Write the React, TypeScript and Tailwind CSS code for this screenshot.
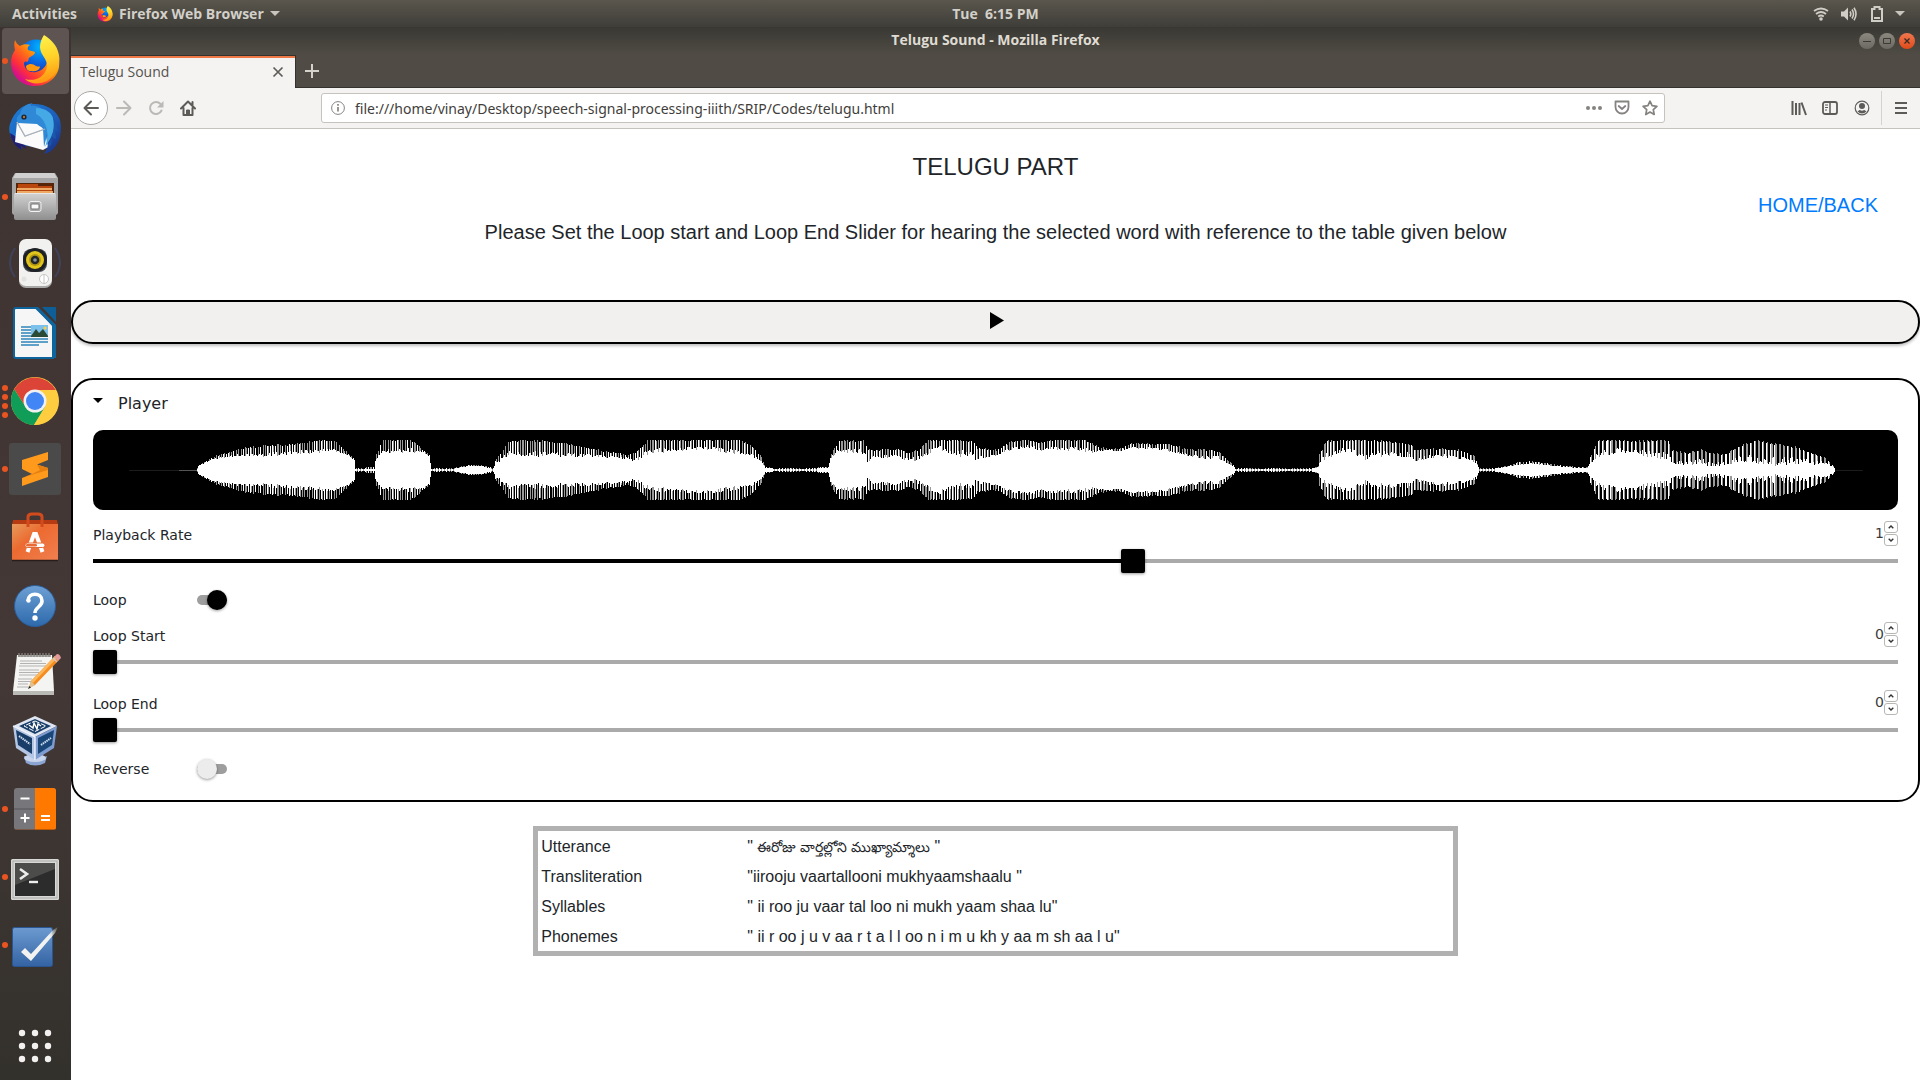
import React, { useState } from "react";

/* Envelope of the clip: [x, peak height, trough height], centre line at 40 */
const ENVELOPE: number[][] = [
  [104, 1, 1], [105, 4, 4], [118, 12, 10], [130, 16, 12], [151, 22, 14], [171, 24, 13], [191, 25, 15], [212, 27, 16],
  [228, 30, 17], [241, 29, 18], [253, 18, 15], [261, 11, 10], [262, 1, 1], [281, 2, 1], [283, 15, 10], [289, 30, 17],
  [318, 30, 17], [330, 20, 17], [336, 15, 13], [338, 1, 1], [359, 1, 1], [375, 4, 4], [387, 4, 4], [400, 1, 1],
  [402, 9, 6], [416, 29, 14], [457, 29, 13], [485, 24, 13], [510, 19, 12], [534, 15, 11], [543, 18, 8], [555, 30, 16],
  [607, 30, 20], [646, 30, 15], [658, 25, 12], [668, 13, 8], [672, 2, 2], [686, 1, 1], [722, 1, 1], [726, 2, 2],
  [735, 2, 2], [737, 14, 11], [745, 29, 17], [771, 29, 16], [775, 20, 5], [777, 20, 11], [805, 21, 13], [813, 17, 9],
  [824, 19, 9], [836, 30, 16], [846, 30, 21], [858, 30, 12], [880, 29, 14], [884, 22, 4], [886, 22, 10], [903, 20, 13],
  [919, 29, 20], [935, 30, 22], [949, 27, 18], [955, 30, 20], [991, 30, 18], [1002, 25, 17], [1014, 21, 20],
  [1026, 21, 18], [1038, 26, 22], [1073, 26, 19], [1097, 20, 13], [1117, 20, 10], [1125, 18, 11], [1141, 3, 3],
  [1142, 1, 1], [1218, 1, 1], [1222, 2, 2], [1225, 3, 3], [1226, 15, 6], [1233, 29, 11], [1254, 30, 19], [1270, 30, 10],
  [1290, 29, 13], [1318, 25, 12], [1322, 19, 8], [1334, 21, 10], [1345, 21, 13], [1365, 20, 11], [1381, 14, 8],
  [1385, 3, 3], [1386, 1, 1], [1399, 1, 1], [1413, 3, 3], [1424, 7, 5], [1440, 8, 6], [1460, 5, 4], [1484, 2, 2],
  [1494, 2, 2], [1495, 9, 4], [1505, 29, 12], [1523, 30, 17], [1543, 29, 15], [1575, 29, 10], [1579, 19, 6],
  [1595, 17, 4], [1608, 20, 6], [1618, 16, 3], [1634, 16, 4], [1646, 24, 9], [1662, 29, 6], [1681, 26, 4],
  [1701, 23, 6], [1721, 16, 5], [1733, 11, 6], [1741, 2, 2], [1745, 1, 1],
];

function buildWave() {
  let white = "";
  let grey = "";
  let k = 0;
  for (let x = 104; x < 1742; x++) {
    while (k < ENVELOPE.length - 2 && ENVELOPE[k + 1][0] <= x) k++;
    const [x0, p0, t0] = ENVELOPE[k];
    const [x1, p1, t1] = ENVELOPE[k + 1];
    const f = (x - x0) / (x1 - x0);
    const peak = p0 + (p1 - p0) * f;
    const trough = t0 + (t1 - t0) * f;
    const noise = Math.abs(Math.sin(x * 12.9898) * 43758.5453) % 1;
    const period = x < 560 ? 2.45 : x < 1200 ? 2.7 : x < 1480 ? 3.1 : 4.1;
    const phase = (x / period) % 1;
    const isPeak = phase < 0.52;
    const bar = (h: number) => `M${x} ${40 - h}h1v${2 * h}h-1z`;
    if (peak < 1.5 && x % 3 === 0) {
      grey += bar(1);
      continue;
    }
    const inner = Math.max(1, Math.round(trough + noise * (peak - trough) * 0.4));
    const outer = Math.max(1, Math.min(30, Math.round(peak + 1 - noise * Math.min(2, peak * 0.1))));
    white += bar(inner);
    if (isPeak) {
      if (phase < 0.3 && noise > 0.3) white += bar(outer);
      else grey += bar(outer);
    }
  }
  return { white, grey };
}
const WAVE = buildWave();

function Firefox({ className }: { className: string }) {
  return (
    <svg viewBox="0 0 52 52" className={className} aria-hidden="true">
      <defs>
        <linearGradient id="ffBody" x1="0.85" y1="0.1" x2="0.15" y2="0.8">
          <stop offset="0" stopColor="#fff44f" /><stop offset="0.3" stopColor="#ffb000" />
          <stop offset="0.55" stopColor="#ff6a1a" /><stop offset="0.8" stopColor="#ff2f3a" /><stop offset="1" stopColor="#d6108a" />
        </linearGradient>
        <radialGradient id="ffGlobe" cx="0.6" cy="0.2" r="0.9">
          <stop offset="0" stopColor="#00b4ff" /><stop offset="0.5" stopColor="#0a62e0" /><stop offset="1" stopColor="#311a86" />
        </radialGradient>
        <linearGradient id="ffTail" x1="0.3" y1="0" x2="0.5" y2="1">
          <stop offset="0" stopColor="#fff44f" /><stop offset="0.5" stopColor="#ffd42a" /><stop offset="1" stopColor="#ff9412" />
        </linearGradient>
      </defs>
      <circle cx="27" cy="23" r="18.5" fill="url(#ffGlobe)" />
      <path d="M6 5c1 3 3 5 5 6 3-2 7-2 10-1-2 1-3 3-2 5 2 1 5 1 7 2 0 3-4 4-6 6-1 2 0 3-2 4-2-1-3 0-3 2 1 6 6 9 12 8 9-2 13-9 11-17-2-5-3-9 0-12 7 4 11 11 12 18 2 14-10 25-24 25C12 51 2 41 2 27 2 22 4 18 6 15c-1-3-1-7 0-10z" fill="url(#ffBody)" />
      <path d="M35 0c6 4 13 9 15 20 2 10-3 21-12 26-8 4-17 3-22-2 10 3 20-2 22-12 1-8-7-12-7-20 0-5 2-9 4-12z" fill="url(#ffTail)" />
      <path d="M17 31c4-3 7-2 10 0 2 1 4 0 4 1-1 4-6 5-9 4-3 0-5-2-5-5z" fill="#ff980e" />
    </svg>
  );
}

const big = "size-[52px] shrink-0";

function Thunderbird() {
  return (
    <svg viewBox="0 0 52 52" className={big} aria-hidden="true">
      <defs>
        <linearGradient id="tb" x1="0" y1="0" x2="1" y2="1"><stop offset="0" stopColor="#1c7fd8" /><stop offset="0.6" stopColor="#1c5cb8" /><stop offset="1" stopColor="#1a2a80" /></linearGradient>
      </defs>
      <path d="M3 16C7 8 13 2 22 1c14-1 25 5 29 16 2 9 1 20-5 27-3 4-7 6-11 7l3-5-26-4 1 5C4 42-2 30 1 21z" fill="url(#tb)" />
      <path d="M1 30c1 8 6 14 12 17l-1-4 6 3-6-9z" fill="#201f72" />
      <path d="M8 19l27 3 4 22-5 3-28-8z" fill="#fbfbfb" />
      <path d="M8 19l8 14 20-7" fill="none" stroke="#a9b2bd" strokeWidth="1.2" />
      <path d="M11 11C13 3 18 1 24 0c-2 1-3 2-2 3 7-1 14 3 16 11 2 9 0 20-3 30l-1-18c-2-3-6-4-10-4l-8 9-8-13c-1-2 0-5 3-7z" fill="#3089d6" />
      <path d="M9 20l7 13 18-7-6-5z" fill="#fbfbfb" />
      <path d="M8 19l8 14 20-7" fill="none" stroke="#a9b2bd" strokeWidth="1.2" />
      <path d="M27 5c10 0 17 5 18 14 1 8-3 17-9 25 3-8 3-17 0-23-2-5-5-8-9-10z" fill="#45a9e6" />
      <path d="M44 14l5 7-2-1 2 9-3-2 1 9-4-2-1 8-4 2c6-9 8-19 6-30z" fill="#1b57ab" />
      <circle cx="15" cy="14" r="2.6" fill="#17233a" /><circle cx="15" cy="14" r="1.2" fill="#b4742a" />
    </svg>
  );
}

function Files() {
  return (
    <svg viewBox="0 0 52 52" className={big} aria-hidden="true">
      <defs>
        <linearGradient id="fi" x1="0" y1="0" x2="0" y2="1"><stop offset="0" stopColor="#d2d2d2" /><stop offset="1" stopColor="#8f8f8f" /></linearGradient>
      </defs>
      <path d="M6 2h40l3 5v34a3 3 0 0 1-3 3H6a3 3 0 0 1-3-3V7z" fill="#a5a5a5" />
      <path d="M7 2h38l3 5H4z" fill="#d0d0d0" />
      <rect x="7" y="12" width="38" height="12" fill="#582509" />
      <path d="M9 13h20v2h14v7H8v-5h1z" fill="#b9460c" />
      <path d="M8 18h35M8 21h36" stroke="#ffcc85" strokeWidth="1.6" />
      <rect x="5" y="22" width="42" height="27" rx="2" fill="url(#fi)" />
      <path d="M6 22.5h40" stroke="#e7e7e7" />
      <rect x="20" y="30.500" width="12" height="10" rx="2" fill="#a7a7a7" stroke="#f3f3f3" />
      <rect x="22" y="33" width="8" height="5" rx="1" fill="#fafafa" stroke="#777" />
    </svg>
  );
}

function Rhythmbox() {
  return (
    <svg viewBox="0 0 52 52" className={big} aria-hidden="true">
      <path d="M6 9q-10 15 0 29M46 9q10 15 0 29" fill="none" stroke="#3f4258" strokeWidth="2" />
      <rect x="10" y="2" width="33" height="47" rx="7" fill="#a8a8a6" />
      <rect x="10" y="0" width="33" height="47" rx="7" fill="#f1f1ef" />
      <rect x="14" y="10" width="24" height="23" rx="8" fill="#42484e" />
      <circle cx="26" cy="21" r="12" fill="#1d2024" />
      <circle cx="26" cy="21" r="9" fill="#e1c41c" />
      <circle cx="26" cy="21" r="6" fill="#b29715" />
      <circle cx="26" cy="21" r="4.300" fill="#22262b" /><circle cx="26" cy="21" r="1.800" fill="#8a949c" />
      <circle cx="35" cy="40" r="4.500" fill="#fff" stroke="#c6c6c4" /><path d="M35 36v8" stroke="#c6c6c4" />
      <circle cx="15" cy="40" r="2.500" fill="#e2e2e0" />
    </svg>
  );
}

function Writer() {
  return (
    <svg viewBox="0 0 52 52" className={big} aria-hidden="true">
      <path d="M7 1h20l17 17v33H7a2 2 0 0 1-2-2V3a2 2 0 0 1 2-2z" fill="#f6f6f6" stroke="#0d639b" strokeWidth="2" />
      <path d="M26 0h3l18 18v33h-3V20z" fill="#0f669f" />
      <path d="M33 0h13a1 1 0 0 1 1 1v14z" fill="#0e5f97" />
      <path d="M12 20h10M12 23h10M12 26h10M12 29h10M12 32h27M12 35h27M12 38h18" stroke="#2f85bb" strokeWidth="1.600" />
      <rect x="22" y="18" width="17" height="12" fill="#7cc1ec" />
      <path d="M22 29l5-7 3 4 4-4 5 7v1H22z" fill="#2b4a36" />
      <circle cx="36" cy="21" r="1.600" fill="#f6cf4d" />
    </svg>
  );
}

function Chrome() {
  return (
    <svg viewBox="0 0 52 52" className={big} aria-hidden="true">
      <circle cx="26" cy="26" r="24" fill="#ffcd40" />
      <path d="M5.200 14A24 24 0 0 0 25 50l11-18-10-6-9.500 5.500z" fill="#0f9d58" />
      <path d="M5.200 14L16.500 31.500 26 15h20.800A24 24 0 0 0 5.200 14z" fill="#db4437" />
      <path d="M46.800 15H26v11l10 6-11 18A24 24 0 0 0 46.800 15z" fill="#ffcd40" />
      <circle cx="26" cy="26" r="11.500" fill="#f1f1f1" />
      <circle cx="26" cy="26" r="9" fill="#4285f4" />
    </svg>
  );
}

function Sublime() {
  return (
    <svg viewBox="0 0 52 52" className={big} aria-hidden="true">
      <rect width="52" height="52" rx="3" fill="#4a4a4a" />
      <path d="M13 17L39 9v8l-11 4.500L39 25v9l-26 9v-8l10-4-10-5z" fill="#ff9a1c" />
      <path d="M28 21.500L39 25v2L17 33.500l6-2.500 8-4z" fill="#e57f10" />
    </svg>
  );
}

function Software() {
  return (
    <svg viewBox="0 0 52 52" className={big} aria-hidden="true">
      <defs><linearGradient id="so" x1="0" y1="0" x2="1" y2="1"><stop offset="0" stopColor="#e79a5b" /><stop offset="0.4" stopColor="#ec6a30" /><stop offset="1" stopColor="#f08050" /></linearGradient></defs>
      <path d="M4 9h44l1 5H3z" fill="#b63a12" />
      <rect x="3" y="13" width="46" height="36" fill="url(#so)" />
      <path d="M3 49.500h46" stroke="#271d1a" strokeWidth="1.500" />
      <path d="M19 16V6q0-3 4-3h6q4 0 4 3v10" fill="none" stroke="#d34a1c" strokeWidth="3" />
      <path d="M18.500 41L25 23h2l6.500 18" fill="none" stroke="#fff" strokeWidth="4" />
      <rect x="16" y="32" width="20" height="4.500" rx="2.200" fill="#fff" stroke="#e36a35" />
      <rect x="17" y="33" width="11" height="2.500" rx="1.200" fill="#ea6a36" />
    </svg>
  );
}

function Help() {
  return (
    <svg viewBox="0 0 52 52" className={big} aria-hidden="true">
      <defs><linearGradient id="he" x1="0" y1="0" x2="0" y2="1"><stop offset="0" stopColor="#6ea0d4" /><stop offset="1" stopColor="#2d69ac" /></linearGradient></defs>
      <circle cx="26" cy="27" r="20.500" fill="url(#he)" stroke="#2b5f9b" />
      <path d="M19 22c0-9 14-9 14 0 0 6-7 6-7 12" fill="none" stroke="#fff" strokeWidth="3.600" />
      <circle cx="19.500" cy="21.500" r="2.200" fill="#fff" />
      <circle cx="26" cy="39" r="2.700" fill="#fff" />
    </svg>
  );
}

function Notes() {
  return (
    <svg viewBox="0 0 52 52" className={big} aria-hidden="true">
      <path d="M8 8h35l2 36v4H4v-4z" fill="#f4f4f2" />
      <path d="M4 44h41v4H4z" fill="#b9b9b5" />
      <path d="M9 9h33" stroke="#a9a9a5" strokeWidth="2" />
      <path d="M10 10V6M13 10V6M16 10V6M19 10V6M22 10V6M25 10V6M28 10V6M31 10V6M34 10V6M37 10V6M40 10V6" stroke="#8b8784" strokeWidth="1.200" />
      <path d="M11 14h22M11 16.500h26M10 19h27M10 23h20M10 25.500h24M10 28h20M9 32h14M9 34.500h13M9 37h10M8 40h14" stroke="#aaa" strokeWidth="0.900" />
      <path d="M46 9l4 4-24 25-6 3 2-7z" fill="#f58c1e" />
      <path d="M46 9l2 2-24 25-2-2z" fill="#fcb65c" />
      <path d="M45 10l3-3q3 0 4 4l-3 3z" fill="#e09a9a" /><path d="M44 11l4 4" stroke="#c9c9c9" strokeWidth="1.500" />
      <path d="M22 34l4 4-7 4z" fill="#dfc195" /><path d="M20.500 39l1.500 1.500-3 1.500z" fill="#222" />
    </svg>
  );
}

function VirtualBox() {
  return (
    <svg viewBox="0 0 52 52" className={big} aria-hidden="true">
      <path d="M15 41q11 6 23 0l-2 7q-10 5-19 0z" fill="#8ba5d2" /><ellipse cx="26" cy="43" rx="11" ry="4" fill="#c9d5ec" />
      <path d="M26 1l22 10-22 11L4 11z" fill="#dfe6f2" />
      <path d="M4 11l22 11v23L7 33z" fill="#b4c6e3" />
      <path d="M48 11L26 22v23l19-12z" fill="#7f9cd0" />
      <path d="M4 11l22 11v23" fill="none" stroke="#f3f7ff" strokeWidth="1.300" />
      <path d="M26 4l16 7-16 8-16-8z" fill="#173d68" />
      <path d="M26 6l11 5-11 5.500L15 11z" fill="none" stroke="#fff" strokeDasharray="5 1.500" />
      <path d="M20 10l4 3 1-5 3 6 1-5 3 2" fill="none" stroke="#fff" strokeWidth="1.400" />
      <path d="M7 15l16 8v16L9 30z" fill="#173d68" /><path d="M45 15l-16 8v16l14-9z" fill="#1a4678" />
      <path d="M10 21l11 8M32 30l10-7" stroke="#d3dff2" strokeWidth="2" strokeDasharray="1.500 0.700" />
    </svg>
  );
}

function Calculator() {
  return (
    <svg viewBox="0 0 52 52" className={big} aria-hidden="true">
      <rect x="5" y="5" width="42" height="42" rx="3" fill="#77767b" />
      <path d="M26 5h18a3 3 0 0 1 3 3v36a3 3 0 0 1-3 3H26z" fill="#ff7800" />
      <path d="M5 26h21" stroke="#55545a" />
      <path d="M5.500 46.500h41" stroke="#7c3d10" opacity="0.500" />
      <path d="M11.500 15.500h9M11.500 35h9M16 30.500v9M32 33h9M32 37h9" stroke="#fff" strokeWidth="2" />
    </svg>
  );
}

function Terminal() {
  return (
    <svg viewBox="0 0 52 52" className={big} aria-hidden="true">
      <rect x="2" y="8" width="48" height="41" rx="1.500" fill="#d8d8d6" />
      <rect x="4" y="10" width="44" height="37" fill="none" stroke="#a9a9a7" />
      <rect x="6" y="12" width="40" height="33" fill="#2c2c2c" />
      <path d="M6 12h40v6L6 34z" fill="#4c4c4b" />
      <path d="M11 18l7 5-7 5" fill="none" stroke="#eee" strokeWidth="2.600" />
      <path d="M20 31h9" stroke="#eee" strokeWidth="2.400" />
    </svg>
  );
}

function Todo() {
  return (
    <svg viewBox="0 0 52 52" className={big} aria-hidden="true">
      <defs>
        <linearGradient id="td" x1="0" y1="0" x2="0" y2="1"><stop offset="0" stopColor="#6c9ad0" /><stop offset="1" stopColor="#3463a4" /></linearGradient>
        <linearGradient id="tdCheck" x1="0" y1="1" x2="1" y2="0"><stop offset="0.75" stopColor="#f2f2f0" /><stop offset="1" stopColor="#f2f2f0" stopOpacity="0.1" /></linearGradient>
      </defs>
      <rect x="3.500" y="8.500" width="40" height="39" rx="2" fill="url(#td)" stroke="#2a5591" />
      <path d="M12 33l4-4 6 6 22-24 5-3-3 6-24 28z" fill="url(#tdCheck)" />
    </svg>
  );
}

function AppGrid() {
  return (
    <svg viewBox="0 0 52 52" className={big} aria-hidden="true">
      {[13, 26, 39].map((y) => [13, 26, 39].map((x) => <circle key={`${x}-${y}`} cx={x} cy={y} r="3.200" fill="#f2f1f0" />))}
    </svg>
  );
}

const DOCK = [
  { name: "Firefox", icon: <Firefox className={big} />, dots: 1, active: true },
  { name: "Thunderbird", icon: <Thunderbird />, dots: 0 },
  { name: "Files", icon: <Files />, dots: 1 },
  { name: "Rhythmbox", icon: <Rhythmbox />, dots: 0 },
  { name: "LibreOffice Writer", icon: <Writer />, dots: 0 },
  { name: "Chrome", icon: <Chrome />, dots: 4 },
  { name: "Sublime Text", icon: <Sublime />, dots: 1 },
  { name: "Ubuntu Software", icon: <Software />, dots: 0 },
  { name: "Help", icon: <Help />, dots: 0 },
  { name: "Text Editor", icon: <Notes />, dots: 0 },
  { name: "VirtualBox", icon: <VirtualBox />, dots: 0 },
  { name: "Calculator", icon: <Calculator />, dots: 1 },
  { name: "Terminal", icon: <Terminal />, dots: 1 },
  { name: "To Do", icon: <Todo />, dots: 1 },
];

function Dock() {
  return (
    <nav aria-label="Dock" className="flex w-[71px] shrink-0 flex-col bg-linear-to-b from-[#3d3331] via-[#443836] via-60% to-[#33312c]">
      {DOCK.map((d) => (
        <button key={d.name} aria-label={d.name} className="relative flex h-[68px] items-center pl-[9px]">
          {d.active && <span className="absolute inset-x-[2px] inset-y-px rounded-sm bg-[#5e5452]" />}
          <span className="absolute left-[2px] flex flex-col gap-[3px]">
            {Array.from({ length: d.dots }, (_, i) => <span key={i} className="size-[6px] rounded-full bg-[#e95420]" />)}
          </span>
          <span className="relative">{d.icon}</span>
        </button>
      ))}
      <button aria-label="Show Applications" className="mt-auto flex h-[68px] items-center pl-[9px]"><AppGrid /></button>
    </nav>
  );
}

function TopBar() {
  return (
    <header className="grid h-[27px] grid-cols-[1fr_auto_1fr] items-center bg-linear-to-b from-[#5a564d] to-[#3f3e39] pl-[71px] font-['Open_Sans',sans-serif] text-[14px] leading-[26px] font-bold text-[#d3d0c9]">
      <div className="-ml-[59px] flex items-center">
        <button>Activities</button>
        <button className="ml-5 flex items-center">
          <Firefox className="size-4" />
          <span className="ml-[6px]">Firefox Web Browser</span>
          <svg viewBox="0 0 10 5" className="ml-[6px] h-[5px] w-[10px]" aria-hidden="true"><path d="M0 0h10L5 5z" fill="#c8c5be" /></svg>
        </button>
      </div>
      <button className="whitespace-pre">Tue  6:15 PM</button>
      <button aria-label="System menu" className="mr-[15px] flex items-center justify-self-end">
        <svg viewBox="0 0 16 14" className="h-[14px] w-[16px]" fill="none" stroke="#d0cdc6" strokeWidth="1.800" aria-hidden="true">
          <path d="M1 4q7-5 14 0M3 7q5-4 10 0M5.200 9.500q2.800-2 5.600 0" /><circle cx="8" cy="12" r="1.800" fill="#d0cdc6" stroke="none" />
        </svg>
        <svg viewBox="0 0 16 14" className="ml-[12px] h-[14px] w-[16px]" fill="none" stroke="#d0cdc6" strokeWidth="1.600" aria-hidden="true">
          <path d="M0 4.500h3l4-4v13l-4-4H0z" fill="#d0cdc6" stroke="none" /><path d="M9 4.500q1.600 2.500 0 5M11 2.500q3 4.500 0 9M13 .8q4 6.200 0 12.400" />
        </svg>
        <svg viewBox="0 0 12 16" className="ml-[14px] h-4 w-3" fill="none" stroke="#d0cdc6" strokeWidth="2" aria-hidden="true">
          <path d="M3.500 1h5v2H11v12H1V3h2.500z" /><path d="M3 12h6" />
        </svg>
        <svg viewBox="0 0 10 5" className="ml-[12px] h-[5px] w-[10px]" aria-hidden="true"><path d="M0 0h10L5 5z" fill="#c8c5be" /></svg>
      </button>
    </header>
  );
}

const winBtn = "flex size-4 items-center justify-center rounded-full bg-linear-to-b from-[#8b887f] to-[#6b6961]";

function TitleBar() {
  return (
    <div className="grid h-7 grid-cols-[1fr_auto_1fr] items-center bg-linear-to-b from-[#393833] to-[#504c45] font-['Open_Sans',sans-serif] text-[14px] leading-[26px] font-bold text-[#dfdbd2]">
      <span />
      <span className="pb-[2px]">Telugu Sound - Mozilla Firefox</span>
      <div className="mr-[5px] flex gap-1 justify-self-end">
        <button aria-label="Minimize" className={winBtn}><svg viewBox="0 0 8 8" className="size-2" stroke="#3b3a35"><path d="M0 4.500h8" /></svg></button>
        <button aria-label="Maximize" className={winBtn}><svg viewBox="0 0 8 8" className="size-2" fill="none" stroke="#3b3a35"><path d="M.5 1.500h7v5h-7z" /></svg></button>
        <button aria-label="Close" className="flex size-4 items-center justify-center rounded-full bg-linear-to-b from-[#f1764d] to-[#df4a16]">
          <svg viewBox="0 0 8 8" className="size-2" stroke="#3b2a22" strokeWidth="1.300"><path d="M1.500 1.500l5 5M6.500 1.500l-5 5" /></svg>
        </button>
      </div>
    </div>
  );
}

function TabStrip() {
  return (
    <div className="flex h-[33px] bg-[#504c45] shadow-[inset_0_-1px_0_#33322e]">
      <div className="flex w-[225px] items-center justify-between border-t border-r border-[#33322e] bg-[#f4f3f2] pr-[11px] pl-[9px] shadow-[inset_0_2px_0_#f07746]">
        <span className="pb-[2px] font-['Open_Sans',sans-serif] text-[14px] text-[#56524d]">Telugu Sound</span>
        <button aria-label="Close tab"><svg viewBox="0 0 12 12" className="size-3" stroke="#5e5c58" strokeWidth="1.700"><path d="M1.500 1.500l9 9M10.500 1.500l-9 9" /></svg></button>
      </div>
      <button aria-label="New tab" className="ml-[9px] pb-[2px]"><svg viewBox="0 0 14 14" className="size-[14px]" stroke="#d5d2cb" strokeWidth="2"><path d="M7 0v14M0 7h14" /></svg></button>
    </div>
  );
}

const ico = "size-4";

function Toolbar() {
  return (
    <div className="flex h-[41px] items-center border-b border-[#c6c3be] bg-[#f4f3f2]">
      <div className="flex w-[250px] shrink-0 items-center pl-[3px] text-[#5d5b58]">
        <button aria-label="Back" className="flex size-[34px] items-center justify-center rounded-full border border-[#aaa8a5] bg-white">
          <svg viewBox="0 0 16 16" className={ico} fill="none" stroke="currentColor" strokeWidth="2" strokeLinecap="round" strokeLinejoin="round"><path d="M15 8H1.500M8 1.500L1.500 8 8 14.500" /></svg>
        </button>
        <button aria-label="Forward" className="ml-2 text-[#bbb9b6]">
          <svg viewBox="0 0 16 16" className={ico} fill="none" stroke="currentColor" strokeWidth="2" strokeLinecap="round" strokeLinejoin="round"><path d="M1 8h13.500M8 1.500L14.500 8 8 14.500" /></svg>
        </button>
        <button aria-label="Reload" className="ml-4 text-[#bbb9b6]">
          <svg viewBox="0 0 16 16" className={ico} fill="none" stroke="currentColor" strokeWidth="2" strokeLinecap="round"><path d="M13.500 10.500A6 6 0 1 1 12.500 4" /><path d="M15.500 1v6.500H9z" fill="currentColor" stroke="none" /></svg>
        </button>
        <button aria-label="Home" className="ml-4">
          <svg viewBox="0 0 16 16" className={ico} fill="none" stroke="currentColor" strokeWidth="2" strokeLinecap="round" strokeLinejoin="round"><path d="M1 8.500L8 1.500l7 7M3.500 8v7h9V8M12.500 2v3" /><path d="M6.500 15v-5h3v5z" fill="currentColor" strokeWidth="1" /></svg>
        </button>
      </div>
      <div className="flex h-[30px] min-w-0 flex-1 items-center rounded-[3px] border border-[#c6c3be] bg-white pr-[6px] pl-[9px] text-[#858380]">
        <svg viewBox="0 0 14 14" className="size-[14px] shrink-0" fill="none" stroke="currentColor" aria-hidden="true"><circle cx="7" cy="7" r="6.400" /><path d="M7 6v4.500M7 3v1.700" strokeWidth="1.700" /></svg>
        <input aria-label="Address" defaultValue="file:///home/vinay/Desktop/speech-signal-processing-iiith/SRIP/Codes/telugu.html" className="ml-[10px] min-w-0 flex-1 bg-transparent font-['Noto_Sans',sans-serif] text-[14px] text-[#3f3e3b] outline-none" />
        <button aria-label="Page actions"><svg viewBox="0 0 16 16" className={ico} fill="currentColor"><circle cx="2" cy="8" r="2" /><circle cx="8" cy="8" r="2" /><circle cx="14" cy="8" r="2" /></svg></button>
        <button aria-label="Save to Pocket" className="ml-3"><svg viewBox="0 0 16 16" className={ico} fill="none" stroke="currentColor" strokeWidth="1.800" strokeLinecap="round" strokeLinejoin="round"><path d="M1.500 1.500h13v5.500a6.500 6.500 0 0 1-13 0z" /><path d="M4.700 6L8 9l3.300-3" /></svg></button>
        <button aria-label="Bookmark" className="ml-3"><svg viewBox="0 0 16 16" className={ico} fill="none" stroke="currentColor" strokeWidth="1.700" strokeLinejoin="round"><path d="M8 1.200l2.100 4.500 4.800.6-3.600 3.300.9 4.900L8 12.100l-4.200 2.400.9-4.900L1.100 6.300l4.800-.6z" /></svg></button>
      </div>
      <div className="flex h-full w-[255px] shrink-0 items-center justify-end pr-3 text-[#5d5b58]">
        <button aria-label="Library"><svg viewBox="0 0 16 16" className={ico} fill="none" stroke="currentColor" strokeWidth="2"><path d="M1.500 1v14M5 3v12M8.500 3v12M10.500 2.500L15 15" /></svg></button>
        <button aria-label="Sidebars" className="ml-[15px]"><svg viewBox="0 0 16 16" className={ico} fill="none" stroke="currentColor" strokeWidth="1.800"><rect x="1" y="2" width="14" height="12" rx="2" /><path d="M8 2v12" strokeWidth="1.500" /><path d="M3 5h3M3 7.500h3M3 10h2" strokeWidth="1" /></svg></button>
        <button aria-label="Account" className="ml-4"><svg viewBox="0 0 16 16" className={ico} fill="none" stroke="currentColor" strokeWidth="1.200"><circle cx="8" cy="8" r="6.800" /><circle cx="8" cy="6" r="3" fill="currentColor" stroke="none" /><path d="M3.500 11.500q2-2 2.500-1.500 2 1.500 4 0 .5-.5 2.500 1.500-4.500 4-9 0z" fill="currentColor" stroke="none" /></svg></button>
        <span className="ml-[11px] h-[34px] w-px bg-[#d5d3d0]" />
        <button aria-label="Menu" className="ml-3"><svg viewBox="0 0 14 14" className="size-[14px]" stroke="currentColor" strokeWidth="2"><path d="M1 2h12M1 7h12M1 12h12" /></svg></button>
      </div>
    </div>
  );
}

function Spin({ up, onClick, label }: { up: boolean; onClick: () => void; label: string }) {
  return (
    <button onClick={onClick} aria-label={label} className="flex h-3 w-[14px] items-center justify-center rounded-[3px] border border-[#b9b7b4] bg-white">
      <svg viewBox="0 0 6 4" className="h-1 w-[6px]" fill="none" stroke="#333" strokeWidth="1.400"><path d={up ? "M.7 3.300L3 1l2.300 2.300" : "M.7.700L3 3 5.300.700"} /></svg>
    </button>
  );
}

function SliderField({ id, label, initial, max, className }: { id: string; label: string; initial: number; max: number; className: string }) {
  const [value, setValue] = useState(initial);
  const ratio = value / max;
  return (
    <div className={className}>
      <div className="flex h-[26px] items-center justify-between">
        <label htmlFor={id} className="pt-1 text-[14px]">{label}</label>
        <div className="flex items-center">
          <input type="number" aria-label={`${label} value`} value={value} onChange={(e) => setValue(Number(e.target.value))}
            className="w-16 appearance-none bg-transparent text-right text-[14px] text-[#3b3b3b] outline-none [-moz-appearance:textfield] [&::-webkit-inner-spin-button]:appearance-none" />
          <div className="flex flex-col gap-px">
            <Spin up label={`Increase ${label}`} onClick={() => setValue(Math.min(max, value + 1))} />
            <Spin up={false} label={`Decrease ${label}`} onClick={() => setValue(Math.max(0, value - 1))} />
          </div>
        </div>
      </div>
      <input id={id} type="range" min={0} max={max} step={0.001} value={value} onChange={(e) => setValue(Number(e.target.value))}
        style={{ backgroundImage: `linear-gradient(to right, #000 ${ratio * 100}%, #aaa ${ratio * 100}%)` }}
        className="mt-[3px] block h-6 w-full cursor-pointer appearance-none rounded-xs bg-[length:100%_4px] bg-center bg-no-repeat [&::-webkit-slider-thumb]:size-6 [&::-webkit-slider-thumb]:appearance-none [&::-webkit-slider-thumb]:rounded-xs [&::-webkit-slider-thumb]:bg-black [&::-webkit-slider-thumb]:shadow-[0_1px_3px_rgba(0,0,0,0.4)]" />
    </div>
  );
}

function Switch({ id, label, on, className }: { id: string; label: string; on: boolean; className: string }) {
  return (
    <div className={className}>
      <label htmlFor={id} className="w-[104px] text-[14px]">{label}</label>
      <input id={id} type="checkbox" role="switch" defaultChecked={on}
        className="relative h-5 w-[30px] cursor-pointer appearance-none before:absolute before:inset-x-0 before:top-[5px] before:h-[10px] before:rounded-full before:bg-[#9e9e9e] after:absolute after:top-0 after:left-0 after:size-5 after:rounded-full after:bg-[#ececec] after:shadow-[0_1px_3px_rgba(0,0,0,0.4)] checked:after:left-[10px] checked:after:bg-black" />
    </div>
  );
}

const ROWS = [
  { name: "Transliteration", text: '"iirooju vaartallooni mukhyaamshaalu "' },
  { name: "Syllables", text: '" ii roo ju vaar tal loo ni mukh yaam shaa lu"' },
  { name: "Phonemes", text: '" ii r oo j u v aa r t a l l oo n i m u kh y aa m sh aa l u"' },
];

function Row({ name, children }: { name: string; children: React.ReactNode }) {
  return (
    <tr className="h-[30px]">
      <th scope="row" className="w-[206px] p-0 pt-[2px] pl-[3px] text-left leading-6 font-normal">{name}</th>
      <td className="p-0 pt-[2px] pl-[3px] leading-6">{children}</td>
    </tr>
  );
}

function Page() {
  return (
    <main className="flex flex-1 flex-col bg-white font-['Liberation_Sans',Arial,sans-serif] text-[#212529]">
      <h1 className="mt-6 text-center text-2xl leading-7">TELUGU PART</h1>
      <a href="#home" className="mt-3 mr-[42px] self-end text-xl leading-6 text-[#007bff]">HOME/BACK</a>
      <p className="mt-[3px] text-center text-xl leading-6">Please Set the Loop start and Loop End Slider for hearing the selected word with reference to the table given below</p>
      <button aria-label="Play" className="mt-14 flex h-11 items-center justify-center rounded-full border-2 border-black bg-[#f1f0ee] pb-[3px] shadow-[0_2px_3px_rgba(0,0,0,0.25)]">
        <svg viewBox="0 0 14 17" className="ml-[2px] h-[17px] w-[14px]"><path d="M0 0l14 8.500L0 17z" fill="#000" /></svg>
      </button>
      <section className="mt-[34px] rounded-[22px] border-2 border-black px-5 pb-[19px] font-['DejaVu_Sans',sans-serif]">
        <button className="flex h-12 items-center text-[16px]">
          <svg viewBox="0 0 10 5" className="mb-2 h-[5px] w-[10px]" aria-hidden="true"><path d="M0 0h10L5 5z" fill="#000" /></svg>
          <span className="ml-[15px]">Player</span>
        </button>
        <div className="mt-[2px] h-20 overflow-hidden rounded-[10px] bg-black">
          <svg viewBox="0 0 1805 80" preserveAspectRatio="none" shapeRendering="crispEdges" className="h-full w-full" role="img" aria-label="Waveform">
            <path d="M36 39.500h50v1H36zM1742 39.500h28v1h-28z" fill="#1c1c1c" />
            <path d="M86 39.500h18v1H86z" fill="#555" />
            <path d={WAVE.grey} fill="#999" />
            <path d={WAVE.white} fill="#fff" />
          </svg>
        </div>
        <SliderField id="rate" label="Playback Rate" initial={1} max={1.733} className="mt-[10px]" />
        <Switch id="loop" label="Loop" on className="mt-[15px] flex h-6 items-center" />
        <SliderField id="loop-start" label="Loop Start" initial={0} max={4} className="mt-[9px]" />
        <SliderField id="loop-end" label="Loop End" initial={0} max={4} className="mt-[15px]" />
        <Switch id="reverse" label="Reverse" on={false} className="mt-[15px] flex h-6 items-center" />
      </section>
      <table className="mx-auto mt-6 w-1/2 border-separate border-spacing-0 border-[5px] border-[#b1b1b1] text-base">
        <tbody>
          <Row name="Utterance">" <span className="text-sm leading-6">ఈరోజు వార్తల్లోని ముఖ్యామ్శాలు</span> "</Row>
          {ROWS.map((r) => <Row key={r.name} name={r.name}>{r.text}</Row>)}
        </tbody>
      </table>
    </main>
  );
}

export default function App() {
  return (
    <div className="flex min-h-screen flex-col">
      <TopBar />
      <div className="flex flex-1">
        <Dock />
        <div className="flex min-w-0 flex-1 flex-col">
          <TitleBar />
          <TabStrip />
          <Toolbar />
          <Page />
        </div>
      </div>
    </div>
  );
}
